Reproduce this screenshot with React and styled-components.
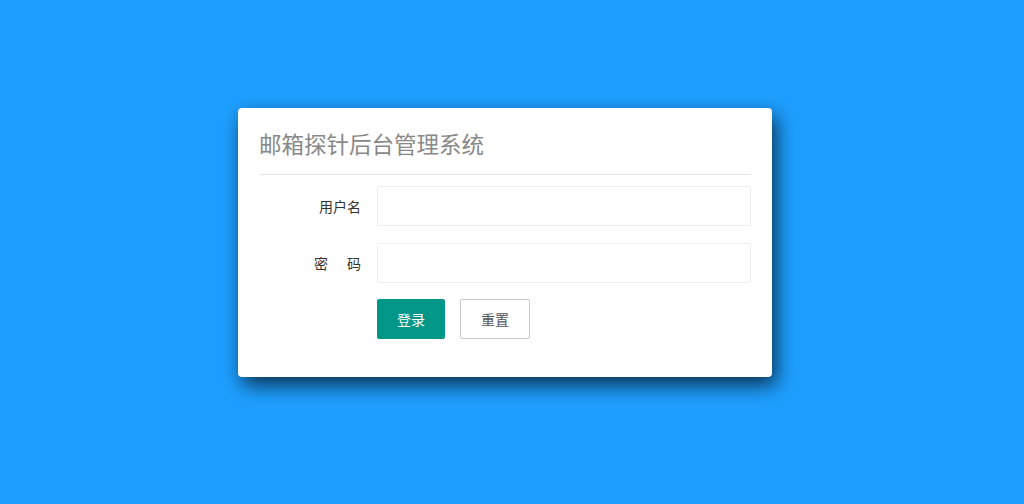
import React, { useState } from "react";
import styled, { createGlobalStyle } from "styled-components";

const GlobalStyle = createGlobalStyle`
  html, body {
    margin: 0;
    padding: 0;
    height: 100%;
    background: #1e9fff;
    font-family: "Microsoft YaHei", "Noto Sans CJK SC", "Liberation Sans", sans-serif;
  }
  #root {
    height: 100%;
  }
`;

const Page = styled.div`
  height: 100%;
  box-sizing: border-box;
  display: flex;
  align-items: center;
  justify-content: center;
  padding: 0 14px 20px 0;
`;

const Card = styled.div`
  width: 534px;
  box-sizing: border-box;
  background: #fff;
  border-radius: 4px;
  padding: 12px 21px 38px;
  box-shadow: 4px 8px 20px rgba(0, 0, 0, 0.7);
`;

const Title = styled.h2`
  margin: 0;
  height: 55px;
  line-height: 46px;
  font-size: 22.5px;
  font-weight: normal;
  color: #888;
  border-bottom: 1px solid #e6e6e6;
  box-sizing: border-box;
`;

const Form = styled.form`
  display: flex;
  flex-direction: column;
  gap: 17px;
  padding-top: 11px;
`;

const Row = styled.div`
  display: flex;
  align-items: center;
`;

const Label = styled.label`
  width: 118px;
  box-sizing: border-box;
  padding-right: 16px;
  text-align: right;
  font-size: 14px;
  color: #333;
`;

const Spaced = styled.span`
  margin-right: 19px;
`;

const Input = styled.input`
  flex: 1;
  height: 40px;
  box-sizing: border-box;
  border: 1px solid #eee;
  border-radius: 2px;
  padding: 0 10px;
  font-size: 14px;
  outline: none;
  &:focus {
    border-color: #d2d2d2;
  }
`;

const Buttons = styled.div`
  display: flex;
  gap: 15px;
  margin-top: -1px;
  padding-left: 118px;
`;

const Button = styled.button`
  height: 40px;
  box-sizing: border-box;
  padding: 0;
  border-radius: 2px;
  font-size: 14px;
  font-family: inherit;
  cursor: pointer;
  border: 1px solid ${(p) => (p.$primary ? "#009688" : "#c9c9c9")};
  background: ${(p) => (p.$primary ? "#009688" : "#fff")};
  color: ${(p) => (p.$primary ? "#fff" : "#555")};
  width: ${(p) => (p.$primary ? "68px" : "70px")};
`;

const App = () => {
  const [user, setUser] = useState("");
  const [pass, setPass] = useState("");

  return (
    <Page>
      <GlobalStyle />
      <Card>
        <Title>邮箱探针后台管理系统</Title>
        <Form onSubmit={(e) => e.preventDefault()}>
          <Row>
            <Label>用户名</Label>
            <Input value={user} onChange={(e) => setUser(e.target.value)} />
          </Row>
          <Row>
            <Label>
              <Spaced>密</Spaced>码
            </Label>
            <Input type="password" value={pass} onChange={(e) => setPass(e.target.value)} />
          </Row>
          <Buttons>
            <Button $primary type="submit">登录</Button>
            <Button type="button" onClick={() => { setUser(""); setPass(""); }}>重置</Button>
          </Buttons>
        </Form>
      </Card>
    </Page>
  );
};

export default App;
